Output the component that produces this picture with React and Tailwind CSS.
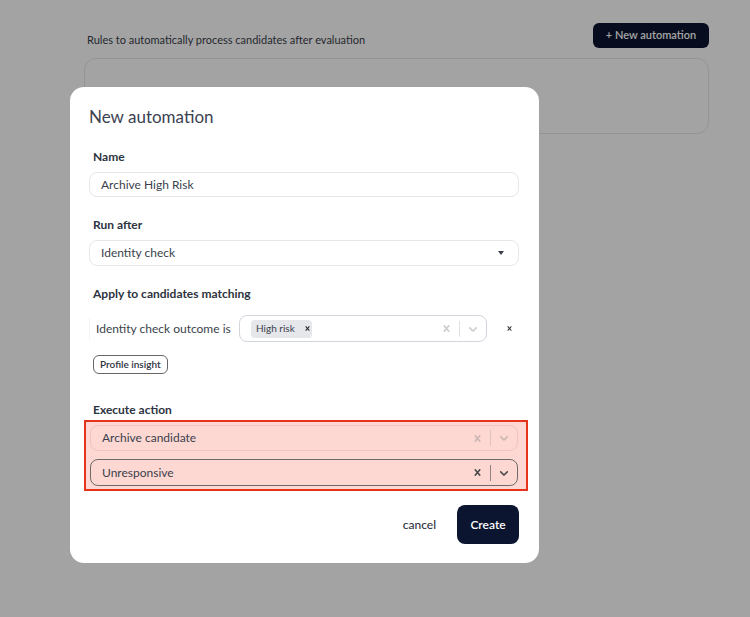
const Cross = ({ className = "" }) => (
  <svg viewBox="0 0 20 20" className={className} fill="currentColor">
    <path d="M14.348 14.849c-0.469 0.469-1.229 0.469-1.697 0l-2.651-3.030-2.651 3.029c-0.469 0.469-1.229 0.469-1.697 0-0.469-0.469-0.469-1.229 0-1.697l2.758-3.15-2.759-3.152c-0.469-0.469-0.469-1.228 0-1.697s1.228-0.469 1.697 0l2.652 3.031 2.651-3.031c0.469-0.469 1.228-0.469 1.697 0s0.469 1.229 0 1.697l-2.758 3.152 2.758 3.15c0.469 0.469 0.469 1.229 0 1.698z" />
  </svg>
)

const Chevron = ({ className = "" }) => (
  <svg viewBox="0 0 20 20" className={className} fill="currentColor">
    <path d="M4.516 7.548c0.436-0.446 1.043-0.481 1.576 0l3.908 3.747 3.908-3.747c0.533-0.481 1.141-0.446 1.574 0 0.436 0.445 0.408 1.197 0 1.615-0.406 0.418-4.695 4.502-4.695 4.502-0.217 0.223-0.502 0.335-0.787 0.335s-0.57-0.112-0.789-0.335c0 0-4.287-4.084-4.695-4.502s-0.436-1.170 0-1.615z" />
  </svg>
)

const Indicators = ({ tone }) => (
  <div className={`flex items-center gap-[6px] pr-[6px] ${tone}`}>
    <Cross className="w-[13px] h-[13px]" />
    <span className="w-px h-[16px] bg-current opacity-60" />
    <Chevron className="w-[14px] h-[14px]" />
  </div>
)

const Label = ({ children }) => (
  <div className="pl-1 text-[12px] leading-4 font-bold text-[#2d3340]">{children}</div>
)

export default function App() {
  return (
    <div className="relative w-[750px] h-[617px] bg-white overflow-hidden" style={{ fontFamily: "Lato, 'Noto Sans', sans-serif" }}>
      <div className="ml-[84px] w-[625px] pt-[23px]">
        <div className="flex items-end justify-between">
          <p className="pl-[3px] text-[11px] text-[#3a3f4b]">Rules to automatically process candidates after evaluation</p>
          <button className="h-[25px] w-[116px] rounded-md bg-[#0b1530] text-[11px] font-semibold text-white">+ New automation</button>
        </div>
        <div className="mt-[10px] h-[76px] rounded-xl border border-gray-200" />
      </div>

      <div className="absolute inset-0 bg-black/[0.36] pl-[70px] pt-[87px]">
        <div className="w-[469px] h-[476px] rounded-[14px] bg-white pl-[19px] pr-5 pt-[19px] flex flex-col">
          <h2 className="text-[17px] leading-[22px] text-[#3b4150]">New automation</h2>

          <div className="mt-[21px]"><Label>Name</Label></div>
          <div className="mt-[7px] h-[25px] rounded-lg border border-gray-200 px-[11px] flex items-center text-[12px] text-[#3a3f4b]">Archive High Risk</div>

          <div className="mt-[20px]"><Label>Run after</Label></div>
          <div className="mt-[7px] h-[26px] rounded-lg border border-gray-200 pl-[11px] pr-[14px] flex items-center justify-between text-[12px] text-[#3a3f4b]">
            <span>Identity check</span>
            <span className="w-0 h-0 border-l-[3.5px] border-r-[3.5px] border-t-[4px] border-l-transparent border-r-transparent border-t-[#3a3f4b]" />
          </div>

          <div className="mt-[20px]"><Label>Apply to candidates matching</Label></div>
          <div className="mt-[13px] h-[27px] flex items-center">
            <div className="w-[150px] h-[22px] flex items-center border-l border-gray-100 pl-[6px] text-[12px] text-[#3a3f4b]">Identity check outcome is</div>
            <div className="w-[248px] h-[27px] rounded-lg border border-gray-300 flex items-center justify-between pl-[11px]">
              <span className="h-[18px] w-[61px] shrink-0 whitespace-nowrap bg-gray-200 rounded-sm flex items-center pl-[5px] gap-[8px] text-[10px] text-[#3a3f4b]">
                High risk
                <Cross className="w-[9px] h-[9px] text-[#222]" />
              </span>
              <Indicators tone="text-[#cccccc]" />
            </div>
            <Cross className="ml-[18px] w-[9px] h-[9px] text-[#333]" />
          </div>

          <div className="mt-[13px] pl-1 flex">
            <span className="flex h-[19px] items-center rounded-md border border-[#666] px-[6px] text-[10px] font-semibold text-[#2d3340]">Profile insight</span>
          </div>

          <div className="mt-[28px]"><Label>Execute action</Label></div>
          <div className="mt-[2px] -ml-[5px] w-[444px] h-[71px] border-2 border-[#e8331c] bg-[#fdd8d3] pl-[4px] pr-[8px] pt-[3px] flex flex-col gap-[8px]">
            <div className="h-[26px] rounded-lg border border-[#f3c3bd] flex items-center justify-between pl-[11px] text-[12px] text-[#3a3f4b]">
              <span>Archive candidate</span>
              <Indicators tone="text-[#c9b5b2]" />
            </div>
            <div className="h-[27px] rounded-lg border border-[#6e6a6a] flex items-center justify-between pl-[11px] text-[12px] text-[#3a3f4b]">
              <span>Unresponsive</span>
              <Indicators tone="text-[#4a4a4a]" />
            </div>
          </div>

          <div className="mt-[14px] flex items-center justify-end gap-[21px]">
            <span className="text-[12px] font-medium text-[#2d3340]">cancel</span>
            <button className="h-[39px] w-[62px] rounded-lg bg-[#0b1530] text-[12px] font-semibold text-white">Create</button>
          </div>
        </div>
      </div>
    </div>
  )
}
